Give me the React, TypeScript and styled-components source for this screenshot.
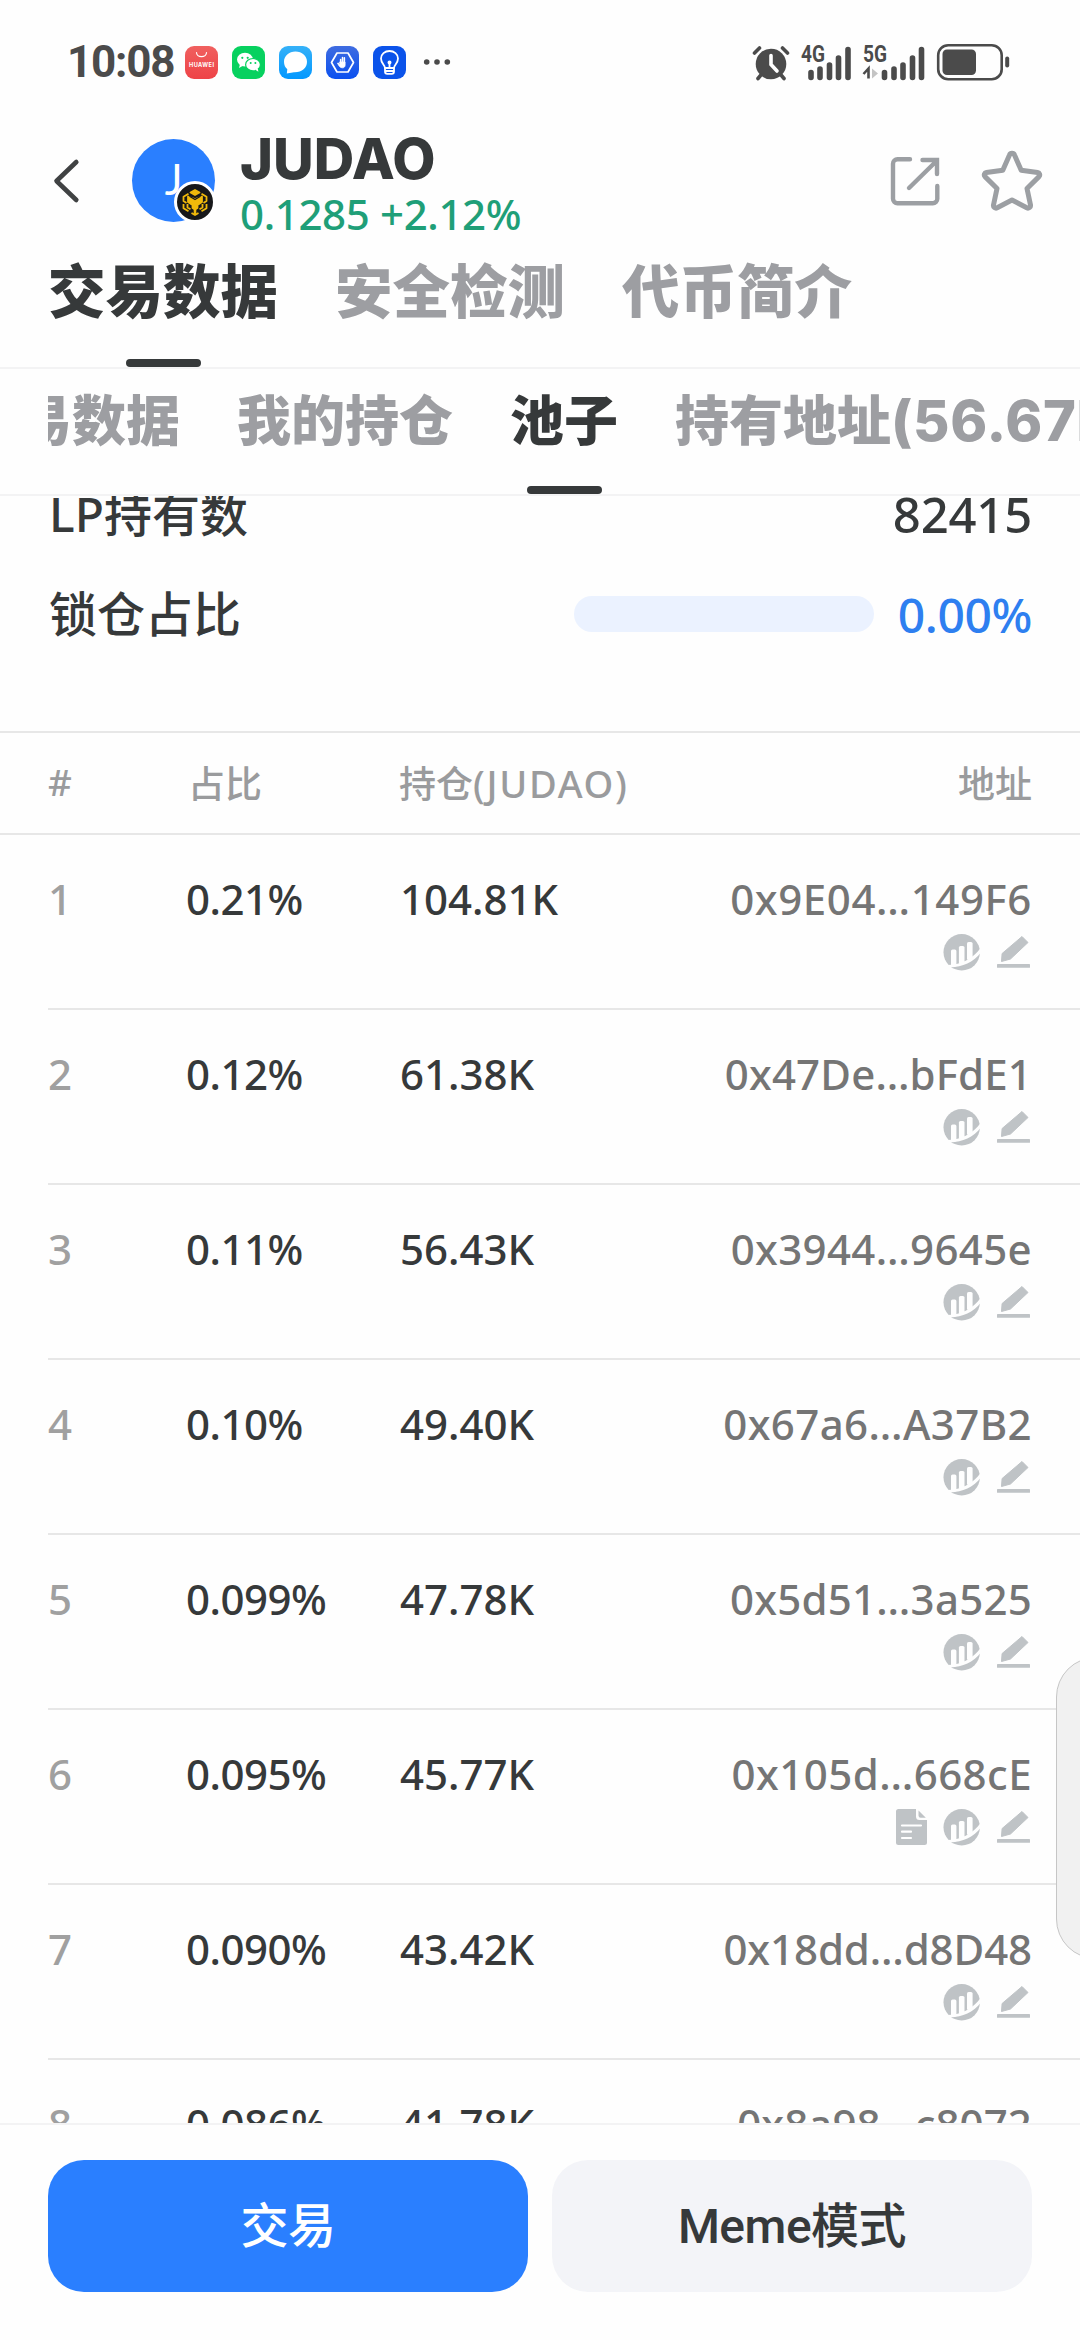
import React from 'react';
import styled, { createGlobalStyle } from 'styled-components';

const GlobalStyle = createGlobalStyle`
  *, *::before, *::after { box-sizing: border-box; }
  html, body { margin: 0; padding: 0; background: #fff; overflow: hidden; }
  svg { display: block; flex: none; }
`;

const ink = '#36393a';
const muted = '#9d9ea2';

const Screen = styled.div`
  width: 1080px;
  height: 2340px;
  display: flex;
  flex-direction: column;
  position: relative;
  overflow: hidden;
  background: #fefefe;
  color: ${ink};
  font-family: 'Noto Sans', 'Noto Sans CJK SC', sans-serif;
  font-weight: 500;
`;

/* ---------- status bar ---------- */

const StatusBar = styled.header`
  flex: none;
  height: 124px;
  padding: 0 70px 0 67px;
  display: flex;
  align-items: center;
  justify-content: space-between;
  color: #4b4b4b;
`;

const StatusGroup = styled.div`
  display: flex;
  align-items: center;
`;

const Clock = styled.span`
  width: 118px;
  font: 700 44px/60px Roboto, sans-serif;
  letter-spacing: -1.2px;
`;

const AppIcon = styled.div<{ $bg: string; $last?: boolean }>`
  width: 33px;
  height: 33px;
  margin-right: ${p => (p.$last ? 17 : 14)}px;
  border-radius: 9px;
  background: ${p => p.$bg};
`;

const GenLabel = styled.text`
  font: 700 23px Roboto, sans-serif;
  fill: #4b4b4b;
`;

const BrandText = styled.text`
  font: 700 5.6px Inter, sans-serif;
  fill: #fff;
`;

/* ---------- token header ---------- */

const TokenHeader = styled.section`
  flex: none;
  height: 121px;
  padding: 0 37px 0 52px;
  display: flex;
  align-items: flex-start;
`;

const BackButton = styled.div`
  width: 80px;
  padding-top: 34px;
`;

const Avatar = styled.div`
  position: relative;
  width: 83px;
  height: 83px;
  margin-top: 15px;
  border-radius: 50%;
  background: #2a7fff;
  color: #fff;
  font: 400 42px/81px Lato, sans-serif;
  text-align: center;
`;

const ChainBadge = styled.div`
  position: absolute;
  left: 42px;
  top: 42px;
  width: 42px;
  height: 42px;
  border: 3px solid #fff;
  border-radius: 50%;
  background: #17181a;
`;

const TokenInfo = styled.div`
  flex: 1;
  margin-left: 25px;
`;

const TokenName = styled.div`
  margin-top: 5px;
  font: 800 56px/60px Inter, sans-serif;
`;

const TokenPrice = styled.div`
  font-size: 42px;
  line-height: 50px;
  letter-spacing: -0.35px;
  color: #1f9f78;
`;

const HeaderActions = styled.div`
  display: flex;
  align-items: center;
  gap: 40px;
  padding-top: 26px;
`;

/* ---------- tabs ---------- */

const TabBar = styled.nav<{ $height: number }>`
  flex: none;
  height: ${p => p.$height}px;
  padding-left: 48px;
  border-bottom: 2px solid #f3f3f4;
`;

const TabStrip = styled.div<{ $scroll?: number }>`
  height: 100%;
  overflow: hidden;
  display: flex;
  gap: 57px;

  & > :first-child {
    margin-left: -${p => p.$scroll ?? 0}px;
  }
`;

const Tab = styled.div<{ $size: number; $pad: number; $active?: boolean }>`
  flex: none;
  position: relative;
  height: 100%;
  padding-top: ${p => p.$pad}px;
  font-family: 'Noto Sans CJK SC', sans-serif;
  font-weight: 900;
  font-size: ${p => p.$size}px;
  line-height: 80px;
  white-space: nowrap;
  color: ${p => (p.$active ? ink : muted)};

  &::after {
    content: '';
    display: ${p => (p.$active ? 'block' : 'none')};
    position: absolute;
    left: 50%;
    bottom: 0;
    width: 75px;
    height: 8px;
    margin-left: -37px;
    border-radius: 4px;
    background: ${ink};
  }
`;

const TabCount = styled.span`
  font: 800 56px/60px Inter, sans-serif;
  letter-spacing: 0.7px;
`;

/* ---------- scrolled content ---------- */

const Content = styled.main`
  flex: 1;
  min-height: 0;
  overflow: hidden;
`;

const Summary = styled.section`
  height: 267px;
  margin-top: -32px;
  padding: 0 48px;
`;

const SummaryRow = styled.div`
  height: 100px;
  display: flex;
  align-items: center;
  font-size: 48px;
  line-height: 70px;
`;

const SummaryLabel = styled.span`
  padding-left: 1px;
`;

const SummaryValue = styled.span`
  margin-left: auto;
  font-size: 49px;
  letter-spacing: -0.2px;
`;

const LockPercent = styled.span`
  margin: 1px 0 0 24px;
  font-size: 48px;
  letter-spacing: -0.4px;
  color: #2e7ff0;
`;

const LockBar = styled.div`
  width: 300px;
  height: 36px;
  margin-left: auto;
  border-radius: 18px;
  background: #ebf2ff;
`;

const TableHead = styled.div`
  height: 104px;
  padding: 0 48px 3px;
  border-top: 2px solid #e7e7e7;
  border-bottom: 2px solid #e7e7e7;
  display: grid;
  grid-template-columns: 138px 213px 1fr auto;
  align-items: center;
  font-size: 37px;
  color: #9a9b9d;
`;

const HeadCell = styled.span<{ $indent?: number }>`
  padding-left: ${p => p.$indent ?? 0}px;
`;

const HeadUnit = styled.span`
  font-size: 38px;
  letter-spacing: 1.7px;
`;

const HolderRow = styled.div`
  height: 175px;
  margin-left: 48px;
  padding: 34px 48px 0 0;
  border-bottom: 2px solid #e7e7e7;
  display: grid;
  grid-template-columns: 138px 213px 1fr auto;
  align-items: start;
  font-size: 42px;
  line-height: 60px;
`;

const Rank = styled.span`
  color: #a0a0a0;
`;

const Share = styled.span`
  letter-spacing: -0.5px;
`;

const Amount = styled.span`
  padding-left: 1px;
`;

const Holder = styled.div`
  display: flex;
  flex-direction: column;
  align-items: flex-end;
`;

const Address = styled.span<{ $spacing: number }>`
  color: #757575;
  letter-spacing: ${p => p.$spacing}px;
`;

const HolderTools = styled.div`
  display: flex;
  align-items: center;
  gap: 16px;
  height: 38px;
  margin: 4px 2px 0 0;
`;

/* ---------- bottom bar ---------- */

const BottomBar = styled.footer`
  flex: none;
  height: 217px;
  padding: 35px 48px 0;
  border-top: 2px solid #f3f3f4;
  display: flex;
  gap: 24px;
`;

const ActionButton = styled.button<{ $primary?: boolean }>`
  flex: 1;
  height: 132px;
  padding: 2px 0 0;
  border: 0;
  border-radius: 36px;
  background: ${p => (p.$primary ? '#2a7fff' : '#f3f4f8')};
  color: ${p => (p.$primary ? '#fff' : ink)};
  font: 500 48px/130px Roboto, 'Noto Sans CJK SC', sans-serif;
  letter-spacing: -0.5px;
`;

const EdgeHandle = styled.div`
  position: absolute;
  left: 1056px;
  top: 1657px;
  width: 80px;
  height: 302px;
  border: 1px solid #c6c6c6;
  border-radius: 48px;
  background: #f1f1f1;
`;

/* ---------- drawings ---------- */

const WeChatGlyph = () => (
  <svg width="33" height="33" viewBox="0 0 33 33">
    <ellipse cx="13" cy="13.6" rx="8" ry="6.8" fill="#fff" />
    <path d="M8 18l-1 4 4-2.2z" fill="#fff" />
    <ellipse cx="21" cy="18.7" rx="7.4" ry="6.2" fill="#fff" stroke="#07d15f" strokeWidth="1.2" />
    <path d="M23 23.6l3.4 2.2-.7-3.6z" fill="#fff" />
    <circle cx="10.3" cy="11.8" r="1.1" fill="#07d15f" />
    <circle cx="15.7" cy="11.8" r="1.1" fill="#07d15f" />
    <circle cx="18.7" cy="17" r="1" fill="#07d15f" />
    <circle cx="23.4" cy="17" r="1" fill="#07d15f" />
  </svg>
);

const MessageGlyph = () => (
  <svg width="33" height="33" viewBox="0 0 33 33">
    <path d="M16.500 5.500C10 5.500 5 10 5 15.700c0 3.400 1.300 5.800 3.300 7.500L7.800 27.500 15 26.200c7.800.3 13-4.200 13-10.500C28 10 23 5.500 16.500 5.500z" fill="#fff" />
  </svg>
);

const HandGlyph = () => (
  <svg width="33" height="33" viewBox="0 0 33 33" fill="none" stroke="#fff" strokeLinecap="round" strokeLinejoin="round">
    <path d="M11 7h11l5.500 9.500L22 26H11L5.500 16.500z" strokeWidth="1.7" />
    <path d="M14.600 17v-3.500M16.500 16v-4.600M18.400 16v-4.200" strokeWidth="1.500" />
    <path d="M13.900 16h5.200v3c0 1.800-1 2.800-2.700 2.800-2.200 0-3.300-1.600-4.900-4.600.900-.3 1.600.2 2.400 1.200z" fill="#fff" strokeWidth=".8" />
  </svg>
);

const BulbGlyph = () => (
  <svg width="33" height="33" viewBox="0 0 33 33" fill="none" stroke="#fff" strokeWidth="1.800" strokeLinecap="round" strokeLinejoin="round">
    <path d="M12 22c0-3-4-4.500-4-9.500a8.500 7.500 0 0 1 17 0c0 5-4 6.500-4 9.500z" />
    <path d="M12 22v3.500c0 1.400 1 2.300 2.300 2.300h4.400c1.300 0 2.300-.9 2.300-2.300V22M12 25h9M16.500 22v-5" />
    <circle cx="16.500" cy="16.500" r="1.100" fill="#fff" />
  </svg>
);

const HuaweiGlyph = () => (
  <svg width="33" height="33" viewBox="0 0 33 33">
    <path d="M11.500 6.500a5 4.200 0 0 0 10 0" fill="none" stroke="#fff" strokeWidth="1.200" strokeLinecap="round" />
    <BrandText x="4" y="21" textLength="25">HUAWEI</BrandText>
  </svg>
);

const MoreDots = () => (
  <svg width="28" height="8" viewBox="0 0 28 8" fill="#4b4b4b">
    <circle cx="3.700" cy="4" r="2.800" />
    <circle cx="14" cy="4" r="2.800" />
    <circle cx="24.300" cy="4" r="2.800" />
  </svg>
);

const SystemIndicators = () => (
  <svg width="258" height="38" viewBox="0 0 258 38" fill="none" stroke="#4b4b4b" strokeLinecap="round">
    <circle cx="19" cy="21" r="15.300" fill="#4b4b4b" stroke="none" />
    <path d="M19 12.500v9l6 6.500" stroke="#fff" strokeWidth="3.600" />
    <path d="M2.500 10l5-5M35.500 10l-5-5" strokeWidth="3.600" />
    <path d="M8.500 32.500l-2.500 3M29.500 32.500l2.500 3" strokeWidth="3.600" />
    <GenLabel x="49" y="19" textLength="24" lengthAdjust="spacingAndGlyphs" stroke="none">4G</GenLabel>
    <path d="M59 29.500v5M68 26v8.500M77.500 22v12.500M86.500 15v19.500M96 6.500v28" strokeWidth="5.600" />
    <GenLabel x="111" y="19" textLength="24" lengthAdjust="spacingAndGlyphs" stroke="none">5G</GenLabel>
    <path d="M111.500 31l5-5.500v10" strokeWidth="2.600" strokeLinecap="butt" />
    <path d="M120 25.500v10l6-5z" fill="#c4c4c4" stroke="none" />
    <path d="M132.500 29.500v5M142 26v8.500M151 22v12.500M160.500 15v19.500M169.500 6.500v28" strokeWidth="5.600" />
    <rect x="186.200" y="2.200" width="63.500" height="34" rx="10" strokeWidth="2.600" />
    <rect x="190.500" y="6.500" width="33.500" height="25.500" rx="4.500" fill="#4b4b4b" stroke="none" />
    <path d="M255.200 15.500v7" strokeWidth="4" />
  </svg>
);

const BackGlyph = () => (
  <svg width="30" height="46" viewBox="0 0 30 46">
    <path d="M24.300 4L4.500 23l19.800 19" fill="none" stroke="#404243" strokeWidth="4.600" strokeLinecap="round" strokeLinejoin="round" />
  </svg>
);

const BnbGlyph = () => (
  <svg width="36" height="36" viewBox="0 0 36 36" fill="none" stroke="#f0b90b" strokeWidth="1.800" strokeLinejoin="round">
    <path d="M13.500 8.500L18 6l4.500 2.500L18 11z" fill="#f0b90b" />
    <path d="M11.500 9.800L6.500 12.800v4.200l3 2M24.500 9.800l5 3v4.200l-3 2M6.500 20v4.300l5 3M29.500 20v4.300l-5 3M14.500 29l3.500 2 3.500-2" />
    <path d="M11 12.500l7 2.500 7-2.500v5.500L20.500 21v3L18 25.500 15.500 24v-3L11 18z" fill="#f0b90b" />
    <path d="M10.500 20v3.500l3 1.800M25.500 20v3.500l-3 1.800" />
    <path d="M18 25v5.500" strokeWidth="2.600" />
    <path d="M12.500 12.200l5.500 3.300 5.500-3.300" stroke="#17181a" strokeWidth="1.300" />
  </svg>
);

const OpenGlyph = () => (
  <svg width="52" height="52" viewBox="0 0 52 52" fill="none" stroke="#9c9fa3" strokeWidth="4.400" strokeLinecap="round">
    <path d="M21 4.200H8.500A4.500 4.500 0 0 0 4 8.700v35A4.500 4.500 0 0 0 8.500 48.200h35.300a4.500 4.500 0 0 0 4.500-4.500V31" />
    <path d="M33.500 5H48v14M47 6.500L20 33" />
  </svg>
);

const StarGlyph = () => (
  <svg width="62" height="62" viewBox="0 0 62 62" fill="none" stroke="#9c9fa3" strokeWidth="5" strokeLinejoin="round">
    <path d="M28.500 5a2.700 2.700 0 0 1 5 0l6.700 15.200 16.400 2.200a2.500 2.500 0 0 1 1.400 4.200L46 38.500l3.500 16.500a2.600 2.600 0 0 1-3.700 2.800L31 50l-14.800 7.800a2.600 2.600 0 0 1-3.700-2.800L16 38.500 4 26.600a2.500 2.500 0 0 1 1.400-4.200l16.400-2.200z" />
  </svg>
);

const ChartGlyph = () => (
  <svg width="38" height="37" viewBox="0 0 38 37">
    <circle cx="18.700" cy="18.300" r="18.200" fill="#bfc3c6" />
    <g fill="#fefefe">
      <rect x="8" y="15.500" width="5.400" height="17" rx="1.600" />
      <rect x="15.900" y="12" width="5.600" height="18" rx="1.600" />
      <rect x="24" y="8" width="5.600" height="18" rx="1.600" />
      <path d="M0 30.800C15 32 28.500 26.500 38 13.500V18.500C30 28.500 20 32.700 7 33.500L3 37z" />
    </g>
  </svg>
);

const PencilGlyph = () => (
  <svg width="33" height="34" viewBox="0 0 33 34" fill="#bfc3c6">
    <path d="M25 1.500l6 6L13.500 24 4.500 26.500l.6-8z" stroke="#bfc3c6" strokeLinejoin="round" />
    <rect x="0" y="29" width="33" height="3.800" rx=".6" />
  </svg>
);

const DocGlyph = () => (
  <svg width="31" height="36" viewBox="0 0 31 36">
    <path d="M2.500 0H20v7.500A3.500 3.500 0 0 0 23.500 11H31v22.500A2.500 2.500 0 0 1 28.500 36h-26A2.500 2.500 0 0 1 0 33.500v-31A2.500 2.500 0 0 1 2.500 0z" fill="#bfc3c6" />
    <path d="M22.500 1.500v5a2.200 2.200 0 0 0 2.200 2.200h5.100z" fill="#bfc3c6" />
    <path d="M6 16.500h19M6 22.700h9M6 29h9" stroke="#fff" strokeWidth="2.200" strokeLinecap="round" />
  </svg>
);

/* ---------- data ---------- */

interface HolderData {
  share: string;
  amount: string;
  address: string;
  spacing: number;
  contract?: boolean;
}

const holders: HolderData[] = [
  { share: '0.21%', amount: '104.81K', address: '0x9E04…149F6', spacing: 0.6 },
  { share: '0.12%', amount: '61.38K', address: '0x47De…bFdE1', spacing: 0.15 },
  { share: '0.11%', amount: '56.43K', address: '0x3944…9645e', spacing: 0.35 },
  { share: '0.10%', amount: '49.40K', address: '0x67a6…A37B2', spacing: 0.4 },
  { share: '0.099%', amount: '47.78K', address: '0x5d51…3a525', spacing: 0.25 },
  { share: '0.095%', amount: '45.77K', address: '0x105d…668cE', spacing: 0.45, contract: true },
  { share: '0.090%', amount: '43.42K', address: '0x18dd…d8D48', spacing: -0.1 },
  { share: '0.086%', amount: '41.78K', address: '0x8a98…c8072', spacing: 0.1 },
];

export default function App() {
  return (
    <Screen>
      <GlobalStyle />
      <StatusBar>
        <StatusGroup>
          <Clock>10:08</Clock>
          <AppIcon $bg="linear-gradient(#f0605f, #ee4347)"><HuaweiGlyph /></AppIcon>
          <AppIcon $bg="#07d15f"><WeChatGlyph /></AppIcon>
          <AppIcon $bg="linear-gradient(#35b1f8, #0398ff)"><MessageGlyph /></AppIcon>
          <AppIcon $bg="linear-gradient(#3f6ce0, #0a50f0)"><HandGlyph /></AppIcon>
          <AppIcon $bg="#0b53ea" $last><BulbGlyph /></AppIcon>
          <MoreDots />
        </StatusGroup>
        <SystemIndicators />
      </StatusBar>

      <TokenHeader>
        <BackButton><BackGlyph /></BackButton>
        <Avatar>
          J
          <ChainBadge><BnbGlyph /></ChainBadge>
        </Avatar>
        <TokenInfo>
          <TokenName>JUDAO</TokenName>
          <TokenPrice>0.1285 +2.12%</TokenPrice>
        </TokenInfo>
        <HeaderActions>
          <OpenGlyph />
          <StarGlyph />
        </HeaderActions>
      </TokenHeader>

      <TabBar $height={124}>
        <TabStrip>
          <Tab $size={57.5} $pad={3} $active>交易数据</Tab>
          <Tab $size={57.5} $pad={3}>安全检测</Tab>
          <Tab $size={57.5} $pad={3}>代币简介</Tab>
        </TabStrip>
      </TabBar>
      <TabBar $height={127}>
        <TabStrip $scroll={84}>
          <Tab $size={54} $pad={9}>交易数据</Tab>
          <Tab $size={54} $pad={9}>我的持仓</Tab>
          <Tab $size={54} $pad={9} $active>池子</Tab>
          <Tab $size={54} $pad={9}>持有地址<TabCount>(56.67K)</TabCount></Tab>
        </TabStrip>
      </TabBar>

      <Content>
        <Summary>
          <SummaryRow>
            <SummaryLabel>LP持有数</SummaryLabel>
            <SummaryValue>82415</SummaryValue>
          </SummaryRow>
          <SummaryRow>
            <SummaryLabel>锁仓占比</SummaryLabel>
            <LockBar />
            <LockPercent>0.00%</LockPercent>
          </SummaryRow>
        </Summary>
        <TableHead>
          <HeadCell>#</HeadCell>
          <HeadCell $indent={2}>占比</HeadCell>
          <HeadCell>持仓<HeadUnit>(JUDAO)</HeadUnit></HeadCell>
          <HeadCell>地址</HeadCell>
        </TableHead>
        {holders.map((h, i) => (
          <HolderRow key={h.address}>
            <Rank>{i + 1}</Rank>
            <Share>{h.share}</Share>
            <Amount>{h.amount}</Amount>
            <Holder>
              <Address $spacing={h.spacing}>{h.address}</Address>
              <HolderTools>
                {h.contract && <DocGlyph />}
                <ChartGlyph />
                <PencilGlyph />
              </HolderTools>
            </Holder>
          </HolderRow>
        ))}
      </Content>

      <BottomBar>
        <ActionButton $primary>交易</ActionButton>
        <ActionButton>Meme模式</ActionButton>
      </BottomBar>
      <EdgeHandle />
    </Screen>
  );
}
